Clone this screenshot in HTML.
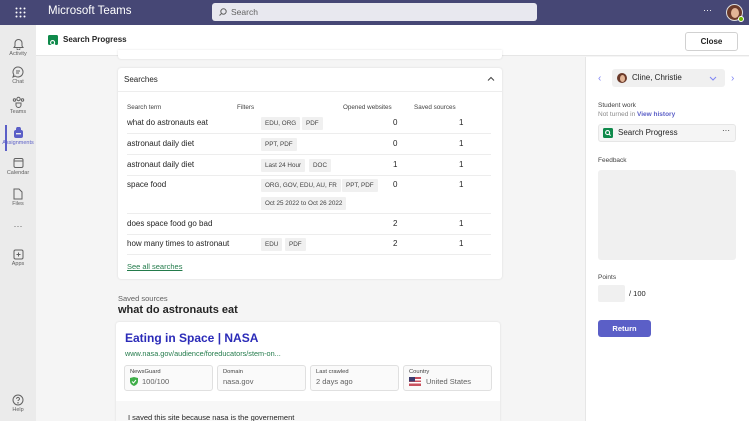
<!DOCTYPE html><html><head><style>
*{box-sizing:border-box;margin:0;padding:0}
html{width:749px;height:421px;overflow:hidden}
body{width:749px;height:421px;overflow:hidden;font-family:"Segoe UI","Liberation Sans",sans-serif;background:#f5f5f5;position:relative;color:#242424}
.abs{position:absolute}
.top{left:0;top:0;width:749px;height:25px;background:#464775}
.rail{left:0;top:25px;width:36px;height:396px;background:#ebebeb}
.ri{position:absolute;left:0;width:36px;text-align:center;font-size:5.5px;color:#616161}
.ri svg{display:block;margin:0 auto 1px}
.hdr{left:36px;top:25px;width:713px;height:31px;background:#fff;border-bottom:1px solid #e6e6e6}
.card{background:#fff;border-radius:3px;box-shadow:0 0 2px rgba(0,0,0,.12)}
.row{position:absolute;left:9px;width:364px;border-bottom:1px solid #ededed;font-size:8px}
.tag{position:absolute;background:#f0f0f0;font-size:6.3px;color:#424242;height:13px;line-height:13px;padding:0 4px;border-radius:1px}
.num{position:absolute;font-size:8px}
.box{position:absolute;top:365px;height:26px;border:1px solid #e0e0e0;border-radius:3px;background:#fafafa;font-size:5.8px;color:#424242;padding:3px 0 0 5px}
.box b{display:block;font-weight:normal;font-size:7.5px;color:#616161;margin-top:2px}
</style></head><body>
<div class="abs top">
 <svg class="abs" style="left:15px;top:7px" width="11" height="11" viewBox="0 0 11 11" fill="#fff"><circle cx="1.5" cy="1.5" r="1"/><circle cx="5.5" cy="1.5" r="1"/><circle cx="9.5" cy="1.5" r="1"/><circle cx="1.5" cy="5.5" r="1"/><circle cx="5.5" cy="5.5" r="1"/><circle cx="9.5" cy="5.5" r="1"/><circle cx="1.5" cy="9.5" r="1"/><circle cx="5.5" cy="9.5" r="1"/><circle cx="9.5" cy="9.5" r="1"/></svg>
 <div class="abs" style="left:48px;top:5px;color:#fff;font-size:11.5px">Microsoft Teams</div>
 <div class="abs" style="left:212px;top:3px;width:325px;height:18px;background:#e8e8ef;border-radius:3px;font-size:8.5px;color:#616161;padding:4px 0 0 19px">Search
  <svg class="abs" style="left:7px;top:5px" width="8" height="8" viewBox="0 0 8 8" fill="none" stroke="#616161"><circle cx="4.5" cy="3.5" r="2.7"/><path d="M2.5 5.5L.5 7.5"/></svg></div>
 <div class="abs" style="left:703px;top:5px;color:#fff;font-size:9px">···</div>
 <div class="abs" style="left:726px;top:4px;width:17px;height:17px;border-radius:50%;background:#6b3a2a;border:1px solid #ddd"><div class="abs" style="left:4px;top:3px;width:8px;height:10px;border-radius:50%;background:#e2b597"></div><div class="abs" style="left:11px;top:11px;width:6px;height:6px;border-radius:50%;background:#6bb700;border:1px solid #fff"></div></div>
</div>
<div class="abs rail">
 <div class="abs" style="left:5px;top:100px;width:2px;height:26px;background:#5b5fc7"></div>
 <div class="ri" style="top:13px"><svg width="11" height="12" viewBox="0 0 11 12" fill="none" stroke="#616161"><path d="M2 8V5a3.5 3.5 0 017 0v3l1 1.5H1z"/><path d="M4 10.5a1.5 1.5 0 003 0"/></svg>Activity</div>
 <div class="ri" style="top:41px"><svg width="12" height="12" viewBox="0 0 12 12" fill="none" stroke="#616161"><path d="M6 1a5 5 0 11-3 9l-2 1 .8-2.3A5 5 0 016 1z"/><path d="M4 5h4M4 7h3"/></svg>Chat</div>
 <div class="ri" style="top:71px"><svg width="13" height="12" viewBox="0 0 13 12" fill="none" stroke="#616161"><circle cx="6.5" cy="3" r="1.7"/><circle cx="2.5" cy="4" r="1.2"/><circle cx="10.5" cy="4" r="1.2"/><path d="M4 7h5v2a2.5 2.5 0 01-5 0z"/></svg>Teams</div>
 <div class="ri" style="top:102px;color:#5b5fc7"><svg width="11" height="12" viewBox="0 0 11 12" fill="#5b5fc7"><path d="M3 2a2.5 2.5 0 015 0v1H3z"/><rect x="1" y="3" width="9" height="8" rx="2"/><rect x="3" y="6" width="5" height="1.4" fill="#ebebeb"/></svg>Assignments</div>
 <div class="ri" style="top:132px"><svg width="11" height="12" viewBox="0 0 11 12" fill="none" stroke="#616161"><rect x="1" y="1.5" width="9" height="9" rx="1.5"/><path d="M1 4h9"/></svg>Calendar</div>
 <div class="ri" style="top:163px"><svg width="10" height="12" viewBox="0 0 10 12" fill="none" stroke="#616161"><path d="M1 1h5l3 3v7H1z"/></svg>Files</div>
 <div class="ri" style="top:196px;font-size:9px">···</div>
 <div class="ri" style="top:224px"><svg width="11" height="11" viewBox="0 0 11 11" fill="none" stroke="#616161"><rect x="1" y="1" width="9" height="9" rx="1.5"/><path d="M5.5 3.5v4M3.5 5.5h4"/></svg>Apps</div>
 <div class="ri" style="top:369px"><svg width="12" height="12" viewBox="0 0 12 12" fill="none" stroke="#616161"><circle cx="6" cy="6" r="5"/><path d="M4.5 4.8a1.5 1.5 0 113 .2c0 1-1.5 1-1.5 2"/><circle cx="6" cy="8.8" r=".3"/></svg>Help</div>
</div>
<div class="abs hdr">
 <div class="abs" style="left:12px;top:10px;width:10px;height:10px;background:#0f8a4b;border-radius:1.5px"><svg width="10" height="10" viewBox="0 0 10 10" fill="none" stroke="#fff" stroke-width="1.1"><circle cx="4.6" cy="4.6" r="2"/><path d="M6 6l1.6 1.6"/></svg></div>
 <div class="abs" style="left:27px;top:10px;font-size:8px;color:#242424;font-weight:600">Search Progress</div>
 <div class="abs" style="left:649px;top:7px;width:53px;height:19px;border:1px solid #d1d1d1;border-radius:3px;text-align:center;font-size:8px;font-weight:600;line-height:17px">Close</div>
</div>
<div class="abs card" style="left:118px;top:50px;width:384px;height:9px;border-radius:0 0 3px 3px"></div>
<div class="abs card" style="left:118px;top:68px;width:384px;height:211px">
 <div class="abs" style="left:0;top:0;width:384px;height:24px;border-bottom:1px solid #ededed;font-size:8px;padding:7px 0 0 6px">Searches</div>
 <svg class="abs" style="left:369px;top:8px" width="8" height="6" viewBox="0 0 8 6" fill="none" stroke="#424242"><path d="M1 4.5l3-3 3 3"/></svg>
 <div class="abs" style="left:9px;top:36px;font-size:6.3px;color:#424242">Search term</div>
 <div class="abs" style="left:119px;top:36px;font-size:6.3px;color:#424242">Filters</div>
 <div class="abs" style="left:225px;top:36px;font-size:6.3px;color:#424242">Opened websites</div>
 <div class="abs" style="left:296px;top:36px;font-size:6.3px;color:#424242">Saved sources</div>
 <div class="row" style="top:47px;height:19px;padding-top:3px">what do astronauts eat</div>
 <div class="row" style="top:66px;height:21px;padding-top:5px">astronaut daily diet</div>
 <div class="row" style="top:87px;height:21px;padding-top:5px">astronaut daily diet</div>
 <div class="row" style="top:108px;height:38px;padding-top:4px">space food</div>
 <div class="row" style="top:146px;height:21px;padding-top:5px">does space food go bad</div>
 <div class="row" style="top:167px;height:20px;padding-top:4px">how many times to astronaut</div>
 <div class="tag" style="left:143px;top:49px">EDU, ORG</div><div class="tag" style="left:184px;top:49px">PDF</div>
 <div class="tag" style="left:143px;top:70px">PPT, PDF</div>
 <div class="tag" style="left:143px;top:91px">Last 24 Hour</div><div class="tag" style="left:191px;top:91px">DOC</div>
 <div class="tag" style="left:143px;top:111px">ORG, GOV, EDU, AU, FR</div><div class="tag" style="left:224px;top:111px">PPT, PDF</div>
 <div class="tag" style="left:143px;top:129px">Oct 25 2022 to Oct 26 2022</div>
 <div class="tag" style="left:143px;top:170px">EDU</div><div class="tag" style="left:167px;top:170px">PDF</div>
 <div class="num" style="left:275px;top:50px">0</div><div class="num" style="left:341px;top:50px">1</div>
 <div class="num" style="left:275px;top:71px">0</div><div class="num" style="left:341px;top:71px">1</div>
 <div class="num" style="left:275px;top:92px">1</div><div class="num" style="left:341px;top:92px">1</div>
 <div class="num" style="left:275px;top:112px">0</div><div class="num" style="left:341px;top:112px">1</div>
 <div class="num" style="left:275px;top:151px">2</div><div class="num" style="left:341px;top:151px">1</div>
 <div class="num" style="left:275px;top:171px">2</div><div class="num" style="left:341px;top:171px">1</div>
 <div class="abs" style="left:9px;top:194px;font-size:7.5px;color:#237b4b;text-decoration:underline">See all searches</div>
</div>
<div class="abs" style="left:118px;top:294px;font-size:7.5px;color:#616161">Saved sources</div>
<div class="abs" style="left:118px;top:304px;font-size:11px;font-weight:600">what do astronauts eat</div>
<div class="abs card" style="left:116px;top:322px;width:384px;height:99px;border-radius:3px 3px 0 0">
 <div class="abs" style="left:0;top:79px;width:384px;height:20px;background:#f7f7f7"></div>
 <div class="abs" style="left:9px;top:9px;font-size:12px;font-weight:600;color:#2b2bb8">Eating in Space | NASA</div>
 <div class="abs" style="left:9px;top:27px;font-size:7.3px;color:#237b4b">www.nasa.gov/audience/foreducators/stem-on...</div>
 <div class="abs" style="left:12px;top:91px;font-size:7.5px">I saved this site because nasa is the governement</div>
</div>
<div class="box" style="left:124px;width:89px">NewsGuard<b style="padding-left:12px;position:relative"><svg style="position:absolute;left:0;top:0" width="8" height="9" viewBox="0 0 8 9"><path d="M0 1l4-1 4 1v3c0 3-2 4-4 5-2-1-4-2-4-5z" fill="#3fae49"/><path d="M2 4.5l1.5 1.5 2.5-3" stroke="#fff" fill="none"/></svg>100/100</b></div>
<div class="box" style="left:217px;width:89px">Domain<b>nasa.gov</b></div>
<div class="box" style="left:310px;width:89px">Last crawled<b>2 days ago</b></div>
<div class="box" style="left:403px;width:89px">Country<b style="padding-left:17px;position:relative"><svg style="position:absolute;left:0;top:0" width="12" height="9" viewBox="0 0 12 9"><rect width="12" height="9" fill="#c8515f"/><rect y="2" width="12" height="1.5" fill="#fff"/><rect y="5" width="12" height="1.5" fill="#fff"/><rect width="6" height="4.5" fill="#3c3b6e"/></svg>United States</b></div>
<div class="abs" style="left:585px;top:57px;width:164px;height:364px;background:#fff;border-left:1px solid #e6e6e6">
 <div class="abs" style="left:12px;top:16px;color:#7f85f5;font-size:10px">‹</div>
 <div class="abs" style="left:145px;top:16px;color:#7f85f5;font-size:10px">›</div>
 <div class="abs" style="left:26px;top:12px;width:113px;height:18px;background:#f0f0f0;border-radius:3px;font-size:8px;padding:4px 0 0 20px">Cline, Christie
  <div class="abs" style="left:5px;top:4px;width:10px;height:10px;border-radius:50%;background:#6b3a2a"><div class="abs" style="left:2.5px;top:2px;width:5px;height:7px;border-radius:50%;background:#e2b597"></div></div>
  <svg class="abs" style="left:97px;top:7px" width="8" height="5" viewBox="0 0 8 5" fill="none" stroke="#7f85f5"><path d="M1 1l3 3 3-3"/></svg></div>
 <div class="abs" style="left:12px;top:45px;font-size:6.5px;color:#424242">Student work</div>
 <div class="abs" style="left:12px;top:54px;font-size:6.5px;color:#8a8a8a">Not turned in <span style="color:#5b5fc7;font-weight:600">View history</span></div>
 <div class="abs" style="left:12px;top:67px;width:138px;height:18px;background:#f5f5f5;border:1px solid #e6e6e6;border-radius:3px;font-size:8px;padding:3px 0 0 19px">Search Progress
  <div class="abs" style="left:4px;top:3px;width:10px;height:10px;background:#0f8a4b;border-radius:1.5px"><svg width="10" height="10" viewBox="0 0 10 10" fill="none" stroke="#fff" stroke-width="1.1"><circle cx="4.6" cy="4.6" r="2"/><path d="M6 6l1.6 1.6"/></svg></div>
  <div class="abs" style="left:123px;top:1px;font-size:8px">···</div></div>
 <div class="abs" style="left:12px;top:100px;font-size:6.5px;color:#424242">Feedback</div>
 <div class="abs" style="left:12px;top:113px;width:138px;height:90px;background:#f0f0f0;border-radius:3px"></div>
 <div class="abs" style="left:12px;top:217px;font-size:6.5px;color:#424242">Points</div>
 <div class="abs" style="left:12px;top:228px;width:27px;height:17px;background:#f0f0f0;border-radius:2px"></div>
 <div class="abs" style="left:43px;top:232px;font-size:7.5px">/ 100</div>
 <div class="abs" style="left:12px;top:263px;width:53px;height:17px;background:#5b5fc7;border-radius:3px;color:#fff;font-size:7.5px;font-weight:600;text-align:center;line-height:17px">Return</div>
</div>
</body></html>
